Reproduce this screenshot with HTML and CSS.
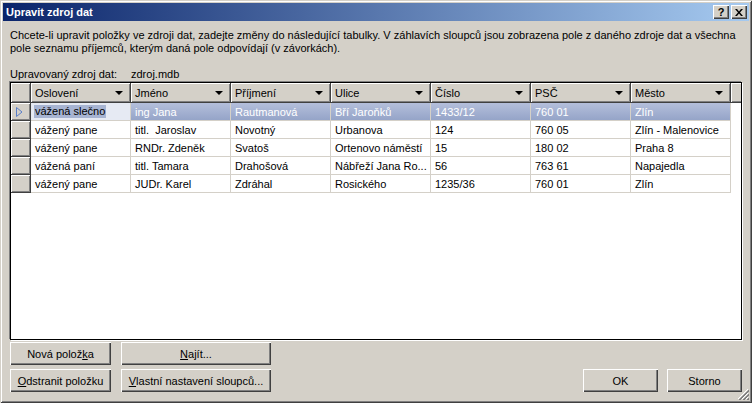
FILE: index.html
```html
<!DOCTYPE html>
<html lang="cs">
<head>
<meta charset="utf-8">
<title>Upravit zdroj dat</title>
<link rel="stylesheet" href="styles.css">
</head>
<body>
<div class="window">
  <div class="titlebar">
    <span class="title">Upravit zdroj dat</span>
    <div class="tb-buttons">
      <div class="tb-btn help">?</div>
      <div class="tb-btn close">
        <svg width="8" height="7" viewBox="0 0 8 7"><path d="M0 0h2l2 2.5L6 0h2L5 3.5 8 7H6L4 4.5 2 7H0l3-3.5z" fill="#000"/></svg>
      </div>
    </div>
  </div>
  <div class="content">
    <p class="intro">Chcete-li upravit položky ve zdroji dat, zadejte změny do následující tabulky. V záhlavích sloupců jsou zobrazena pole z daného zdroje dat a všechna<br>pole seznamu příjemců, kterým daná pole odpovídají (v závorkách).</p>
    <div class="source"><span class="source-label">Upravovaný zdroj dat:</span><span>zdroj.mdb</span></div>
    <div class="grid">
      <div class="table">
        <div class="hc corner"></div>
        <div class="hc"><span>Oslovení</span><i class="arrow"></i></div>
        <div class="hc"><span>Jméno</span><i class="arrow"></i></div>
        <div class="hc"><span>Příjmení</span><i class="arrow"></i></div>
        <div class="hc"><span>Ulice</span><i class="arrow"></i></div>
        <div class="hc"><span>Číslo</span><i class="arrow"></i></div>
        <div class="hc"><span>PSČ</span><i class="arrow"></i></div>
        <div class="hc"><span>Město</span><i class="arrow"></i></div>
        <div class="hc fill"></div>

        <div class="rh"><svg width="7" height="10" viewBox="0 0 7 10"><path d="M0.5 0.5 L6 5 L0.5 9.5 Z" fill="none" stroke="#5a7ec8" stroke-width="1"/></svg></div>
        <div class="c focus"><span class="sel">vážená slečno</span></div>
        <div class="c hl">ing Jana</div>
        <div class="c hl">Rautmanová</div>
        <div class="c hl">Bří Jaroňků</div>
        <div class="c hl">1433/12</div>
        <div class="c hl">760 01</div>
        <div class="c hl">Zlín</div>
        <div class="c fill"></div>

        <div class="rh"></div>
        <div class="c">vážený pane</div>
        <div class="c">titl.&nbsp; Jaroslav</div>
        <div class="c">Novotný</div>
        <div class="c">Urbanova</div>
        <div class="c">124</div>
        <div class="c">760 05</div>
        <div class="c">Zlín - Malenovice</div>
        <div class="c fill"></div>

        <div class="rh"></div>
        <div class="c">vážený pane</div>
        <div class="c">RNDr. Zdeněk</div>
        <div class="c">Svatoš</div>
        <div class="c">Ortenovo náměstí</div>
        <div class="c">15</div>
        <div class="c">180 02</div>
        <div class="c">Praha 8</div>
        <div class="c fill"></div>

        <div class="rh"></div>
        <div class="c">vážená paní</div>
        <div class="c">titl. Tamara</div>
        <div class="c">Drahošová</div>
        <div class="c">Nábřeží Jana Ro...</div>
        <div class="c">56</div>
        <div class="c">763 61</div>
        <div class="c">Napajedla</div>
        <div class="c fill"></div>

        <div class="rh"></div>
        <div class="c">vážený pane</div>
        <div class="c">JUDr. Karel</div>
        <div class="c">Zdráhal</div>
        <div class="c">Rosického</div>
        <div class="c">1235/36</div>
        <div class="c">760 01</div>
        <div class="c">Zlín</div>
        <div class="c fill"></div>
      </div>
    </div>
    <div class="actions">
      <div class="left-buttons">
        <div class="btn">Nová polož<u>k</u>a</div>
        <div class="btn"><u>N</u>ajít...</div>
        <div class="btn"><u>O</u>dstranit položku</div>
        <div class="btn"><u>V</u>lastní nastavení sloupců...</div>
      </div>
      <div class="right-buttons">
        <div class="btn">OK</div>
        <div class="btn">Storno</div>
      </div>
    </div>
  </div>
  <svg class="grip" width="12" height="12" viewBox="0 0 12 12">
    <path d="M11 1L1 11M11 5L5 11M11 9L9 11" stroke="#fff" stroke-width="1"/>
    <path d="M12 2L2 12M12 3L3 12M12 6L6 12M12 7L7 12M12 10L10 12M12 11L11 12" stroke="#808080" stroke-width="1"/>
  </svg>
</div>
</body>
</html>
```

FILE: styles.css
```css
html, body {
  margin: 0;
  padding: 0;
  background: #d4d0c8;
}

body {
  font-family: "Liberation Sans", Arial, sans-serif;
  font-size: 11px;
  color: #000;
}

.window {
  position: relative;
  width: 752px;
  height: 403px;
  box-sizing: border-box;
  padding: 3px;
  background: #d4d0c8;
  box-shadow: inset 1px 1px 0 #d4d0c8, inset -1px -1px 0 #404040, inset 2px 2px 0 #fff, inset -2px -2px 0 #808080;
  display: flex;
  flex-direction: column;
}

.titlebar {
  height: 18px;
  display: flex;
  align-items: center;
  justify-content: space-between;
  padding: 0 2px 0 3px;
  background: linear-gradient(to right, #0a246a, #a6caf0);
}

.title {
  color: #fff;
  font-weight: bold;
  font-size: 11px;
}

.tb-buttons {
  display: flex;
  gap: 2px;
}

.tb-btn {
  width: 16px;
  height: 14px;
  box-sizing: border-box;
  background: #d4d0c8;
  box-shadow: inset 1px 1px 0 #fff, inset -1px -1px 0 #404040, inset -2px -2px 0 #808080;
  display: flex;
  align-items: center;
  justify-content: center;
  font-weight: bold;
  font-size: 11px;
  line-height: 14px;
}

.tb-btn.help {
  padding-bottom: 1px;
}

.content {
  flex: 1;
  display: flex;
  flex-direction: column;
  padding: 0 7px;
}

.intro {
  margin: 8px 0 0;
  line-height: 13px;
  white-space: nowrap;
}

.source {
  margin-top: 13px;
  line-height: 13px;
  display: flex;
}

.source-label {
  width: 121px;
}

.grid {
  margin-top: 1px;
  height: 258px;
  box-sizing: border-box;
  border: 1px solid #000;
  background: #fff;
  box-shadow: -1px -1px 0 #808080, 1px 1px 0 #fff;
  overflow: hidden;
}

.table {
  display: grid;
  grid-template-columns: 20px repeat(7, 100px) 1fr;
  grid-template-rows: 20px repeat(5, 18px);
}

.hc {
  box-sizing: border-box;
  background: #d4d0c8;
  border-right: 1px solid #404040;
  border-bottom: 1px solid #404040;
  box-shadow: inset 1px 1px 0 #fff, inset -1px -1px 0 #808080;
  display: flex;
  align-items: center;
  justify-content: space-between;
  padding: 0 7px 0 4px;
  white-space: nowrap;
}

.hc.fill {
  border-right: none;
}

.arrow {
  width: 0;
  height: 0;
  border-left: 4px solid transparent;
  border-right: 4px solid transparent;
  border-top: 4px solid #000;
}

.rh {
  box-sizing: border-box;
  background: #d4d0c8;
  border-right: 1px solid #404040;
  border-bottom: 1px solid #404040;
  box-shadow: inset 1px 1px 0 #fff, inset -1px -1px 0 #808080;
  display: flex;
  align-items: center;
  padding-left: 5px;
}

.c {
  box-sizing: border-box;
  border-right: 1px solid #d4d0c8;
  border-bottom: 1px solid #d4d0c8;
  padding-left: 4px;
  display: flex;
  align-items: center;
  white-space: nowrap;
  overflow: hidden;
}

.c.fill {
  border: none;
}

.c.focus {
  background: #e6eaf3;
  padding-left: 3px;
}

.sel {
  background: #a7b4d2;
  padding: 0 1px;
  line-height: 13px;
}

.c.hl {
  background: linear-gradient(#b4bfdb, #95a4c8);
  color: #fff;
}

.actions {
  margin-top: 2px;
  display: flex;
  justify-content: space-between;
  align-items: flex-end;
}

.left-buttons {
  display: grid;
  grid-template-columns: 101px 150px;
  grid-auto-rows: 23px;
  column-gap: 10px;
  row-gap: 4px;
}

.right-buttons {
  display: flex;
  gap: 9px;
}

.right-buttons .btn {
  width: 75px;
  height: 23px;
}

.btn {
  box-sizing: border-box;
  background: #d4d0c8;
  box-shadow: inset 1px 1px 0 #fff, inset -1px -1px 0 #404040, inset -2px -2px 0 #808080;
  display: flex;
  align-items: center;
  justify-content: center;
  white-space: nowrap;
}

.grip {
  position: absolute;
  right: 3px;
  bottom: 3px;
}
```
